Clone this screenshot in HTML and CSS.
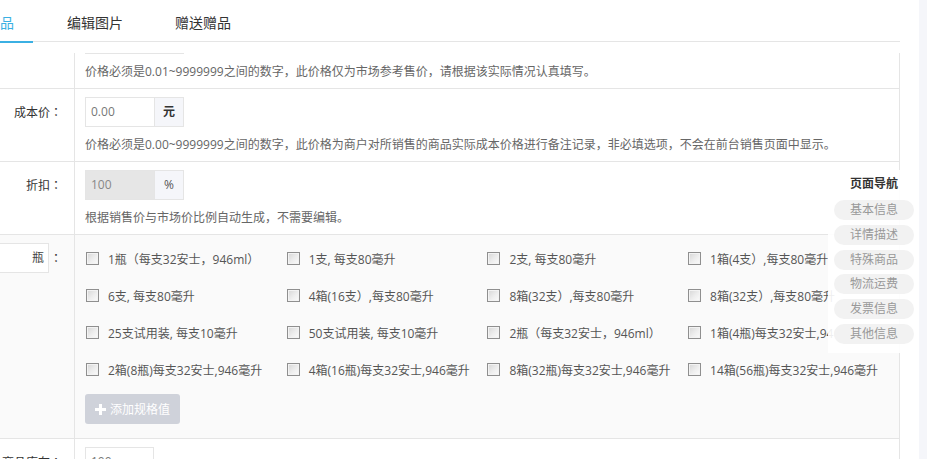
FILE: index.html
```html
<!DOCTYPE html>
<html lang="zh-CN">
<head>
<meta charset="utf-8">
<title>编辑商品</title>
<link rel="stylesheet" href="styles.css">
</head>
<body>
<div class="page">
  <div class="main">
    <header class="header">
      <nav class="tabs">
        <a class="tab tab-first active">品</a>
        <a class="tab">编辑图片</a>
        <a class="tab">赠送赠品</a>
      </nav>
    </header>

    <div class="form">
      <div class="row row-cut">
        <div class="label"></div>
        <div class="field field-cut">
          <div class="cut-input"></div>
          <p class="help">价格必须是0.01~9999999之间的数字，此价格仅为市场参考售价，请根据该实际情况认真填写。</p>
        </div>
      </div>

      <div class="row">
        <div class="label">成本价<span class="colon">：</span></div>
        <div class="field">
          <div class="group">
            <span class="input">0.00</span><span class="addon addon-bold">元</span>
          </div>
          <p class="help">价格必须是0.00~9999999之间的数字，此价格为商户对所销售的商品实际成本价格进行备注记录，非必填选项，不会在前台销售页面中显示。</p>
        </div>
      </div>

      <div class="row">
        <div class="label">折扣<span class="colon">：</span></div>
        <div class="field">
          <div class="group">
            <span class="input input-disabled">100</span><span class="addon">%</span>
          </div>
          <p class="help">根据销售价与市场价比例自动生成，不需要编辑。</p>
        </div>
      </div>

      <div class="row row-spec">
        <div class="label label-spec">
          <span class="spec-name">瓶</span><span class="colon">：</span>
        </div>
        <div class="field field-spec">
          <div class="specs">
            <label class="spec"><span class="cb"></span>1瓶（每支32安士，946ml）</label>
            <label class="spec"><span class="cb"></span>1支, 每支80毫升</label>
            <label class="spec"><span class="cb"></span>2支, 每支80毫升</label>
            <label class="spec"><span class="cb"></span>1箱(4支）,每支80毫升</label>
            <label class="spec"><span class="cb"></span>6支, 每支80毫升</label>
            <label class="spec"><span class="cb"></span>4箱(16支）,每支80毫升</label>
            <label class="spec"><span class="cb"></span>8箱(32支）,每支80毫升</label>
            <label class="spec"><span class="cb"></span>8箱(32支）,每支80毫升</label>
            <label class="spec"><span class="cb"></span>25支试用装, 每支10毫升</label>
            <label class="spec"><span class="cb"></span>50支试用装, 每支10毫升</label>
            <label class="spec"><span class="cb"></span>2瓶（每支32安士，946ml）</label>
            <label class="spec"><span class="cb"></span>1箱(4瓶)每支32安士,946毫升</label>
            <label class="spec"><span class="cb"></span>2箱(8瓶)每支32安士,946毫升</label>
            <label class="spec"><span class="cb"></span>4箱(16瓶)每支32安士,946毫升</label>
            <label class="spec"><span class="cb"></span>8箱(32瓶)每支32安士,946毫升</label>
            <label class="spec"><span class="cb"></span>14箱(56瓶)每支32安士,946毫升</label>
          </div>
          <button class="btn-add" type="button"><svg class="plus" viewBox="0 0 11 11" width="11" height="11"><path d="M4 0h3v4h4v3H7v4H4V7H0V4h4z" fill="#fff"/></svg>添加规格值</button>
        </div>
      </div>

      <div class="row">
        <div class="label">商品库存<span class="colon">：</span></div>
        <div class="field">
          <div class="group">
            <span class="input input-solo">100</span>
          </div>
        </div>
      </div>
    </div>

    <aside class="pagenav">
      <div class="pagenav-title">页面导航</div>
      <a class="pill">基本信息</a>
      <a class="pill">详情描述</a>
      <a class="pill">特殊商品</a>
      <a class="pill">物流运费</a>
      <a class="pill">发票信息</a>
      <a class="pill">其他信息</a>
    </aside>
  </div>
  <div class="strip"></div>
</div>
</body>
</html>
```

FILE: styles.css
```css
html, body {
  margin: 0;
  padding: 0;
}

body {
  font-family: "Open Sans", "Noto Sans CJK SC", sans-serif;
  font-size: 12px;
  color: #333;
  background: #f5f6fa;
}

.page {
  display: flex;
  height: 459px;
  overflow: hidden;
}

.main {
  position: relative;
  width: 919px;
  background: #fff;
  flex: none;
}

.strip {
  flex: 1;
  background: #f5f6fa;
}

/* header / tabs */
.header {
  height: 53px;
}

.tabs {
  display: flex;
  width: 900px;
  height: 41px;
  border-bottom: 1px solid #e5e5e5;
}

.tab {
  position: relative;
  height: 41px;
  line-height: 46px;
  padding: 0 26px;
  font-size: 14px;
  color: #333;
  white-space: nowrap;
}

.tab-first {
  padding: 0 19px 0 0;
  margin-right: 8px;
}

.tab.active {
  color: #3bb0e3;
}

.tab.active::after {
  content: "";
  position: absolute;
  left: 0;
  right: 0;
  top: 41px;
  height: 2px;
  background: #3bb0e3;
}

/* form */
.form {
  width: 899px;
  border-right: 1px solid #e5e5e5;
}

.row {
  display: flex;
  border-bottom: 1px solid #e5e5e5;
}

.label {
  flex: none;
  width: 75px;
  box-sizing: border-box;
  border-right: 1px solid #e5e5e5;
  padding: 8px 12px 0 0;
  line-height: 30px;
  text-align: right;
  color: #333;
  white-space: nowrap;
}

.colon {
  display: inline-block;
  width: 12px;
  text-align: left;
  font-family: "Noto Sans CJK TC", sans-serif;
}

.field {
  flex: 1;
  padding: 8px 0 7px 10px;
  min-width: 0;
}

.field-cut {
  padding-top: 0;
}

.cut-input {
  width: 99px;
  border-bottom: 1px solid #e5e5e5;
}

.help {
  margin: 9px 0 0;
  line-height: 18px;
  color: #666;
  white-space: nowrap;
}

.group {
  display: flex;
  height: 30px;
}

.input {
  box-sizing: border-box;
  width: 69px;
  height: 30px;
  line-height: 28px;
  padding-left: 5px;
  border: 1px solid #e5e5e5;
  border-right: none;
  background: #fff;
  color: #777;
}

.input-disabled {
  background: #e6e6e6;
  color: #888;
}

.input-solo {
  border-right: 1px solid #e5e5e5;
}

.addon {
  box-sizing: border-box;
  width: 30px;
  height: 30px;
  line-height: 28px;
  text-align: center;
  border: 1px solid #e5e5e5;
  background: #f5f6fa;
  color: #555;
}

.addon-bold {
  font-weight: bold;
  color: #333;
}

/* spec row */
.row-spec {
  background: #fafafa;
}

.label-spec {
  display: flex;
  padding-left: 0;
}

.spec-name {
  flex: 1;
  box-sizing: border-box;
  height: 30px;
  line-height: 28px;
  border: 1px solid #e5e5e5;
  border-left: none;
  background: #fff;
  text-align: right;
  padding-right: 4px;
  margin-right: 1px;
  color: #444;
}

.field-spec {
  padding: 5px 0 14px 10px;
}

.specs {
  display: grid;
  grid-template-columns: repeat(4, 200.7px);
}

.spec {
  display: flex;
  align-items: center;
  height: 37px;
  white-space: nowrap;
  color: #555;
  line-height: 18px;
  padding-top: 2px;
  box-sizing: border-box;
}

.cb {
  flex: none;
  box-sizing: border-box;
  width: 13px;
  height: 13px;
  margin: -3px 9px 0 1px;
  border: 1px solid #8f8f8f;
  background: linear-gradient(135deg, #d6d6d6 0%, #eeeeee 55%, #fbfbfb 100%);
  box-shadow: inset 0 0 0 1px #f3f3f3;
}

.btn-add {
  display: flex;
  align-items: center;
  margin-top: 6px;
  width: 95px;
  height: 30px;
  padding: 0 0 0 10px;
  border: none;
  border-radius: 3px;
  background: #cfd2da;
  color: #fff;
  font-family: "Open Sans", "Noto Sans CJK SC", sans-serif;
  font-size: 12px;
  box-sizing: border-box;
}

.plus {
  margin-right: 4px;
  flex: none;
}

/* right page nav */
.pagenav {
  position: absolute;
  left: 828px;
  top: 170px;
  width: 90px;
  padding: 5px 0 4px;
  background: rgba(255, 255, 255, 0.9);
}

.pagenav-title {
  line-height: 18px;
  text-align: right;
  padding-right: 20px;
  font-weight: bold;
  color: #333;
  margin-bottom: 7px;
}

.pill {
  display: block;
  margin: 0 0 4.8px 6px;
  width: 80px;
  height: 20px;
  line-height: 20px;
  border-radius: 10px;
  background: #f2f2f2;
  color: #999;
  text-align: center;
}
```
